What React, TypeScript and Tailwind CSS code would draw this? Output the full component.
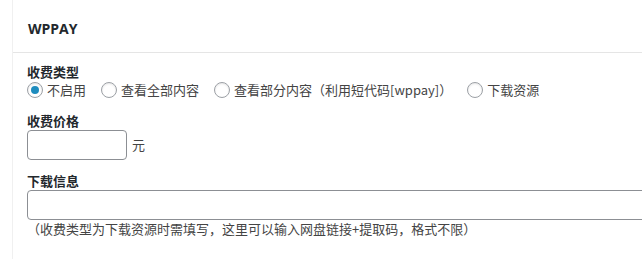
import React from "react";

const font = { fontFamily: '"Noto Sans CJK SC", "Noto Sans", sans-serif' };

function Radio({ checked, label }: { checked?: boolean; label: string }) {
  return (
    <label className="flex items-center mr-[15px]">
      <span className="w-[16px] h-[16px] rounded-full border border-[#9ca0a5] bg-white flex items-center justify-center mr-[4px] shadow-[inset_0_1px_2px_rgba(0,0,0,0.1)]">
        {checked && <span className="w-[8px] h-[8px] rounded-full bg-[#1e8cbe]" />}
      </span>
      <span>{label}</span>
    </label>
  );
}

export default function App() {
  return (
    <div className="w-[642px] h-[259px] bg-white overflow-hidden pl-[12px]" style={font}>
      <div className="h-full border-l border-[#f0f0f0] w-[700px] text-[13px] leading-[18px] text-[#444]">
        <div className="h-[53px] border-b border-[#e5e5e5] pl-[15px] pt-[19px]">
          <div className="text-[14px] leading-[20px] font-bold text-[#23282d]" style={{ fontFamily: '"Open Sans", "Liberation Sans", sans-serif' }}>WPPAY</div>
        </div>
        <div className="pl-[14px] pt-[10px]">
          <div className="font-bold text-[#23282d]">收费类型</div>
          <div className="flex items-center h-[18px]">
            <Radio checked label="不启用" />
            <Radio label="查看全部内容" />
            <Radio label="查看部分内容（利用短代码[wppay]）" />
            <Radio label="下载资源" />
          </div>
          <div className="font-bold text-[#23282d] mt-[13px]">收费价格</div>
          <div className="flex items-center">
            <div className="w-[100px] h-[30px] border border-[#8c8f94] rounded-[4px] bg-white" />
            <span className="ml-[5px]">元</span>
          </div>
          <div className="font-bold text-[#23282d] mt-[12px]">下载信息</div>
          <div className="w-[640px] h-[30px] border border-[#8c8f94] rounded-[4px] bg-white" />
          <div>（收费类型为下载资源时需填写，这里可以输入网盘链接+提取码，格式不限）</div>
        </div>
      </div>
    </div>
  );
}
